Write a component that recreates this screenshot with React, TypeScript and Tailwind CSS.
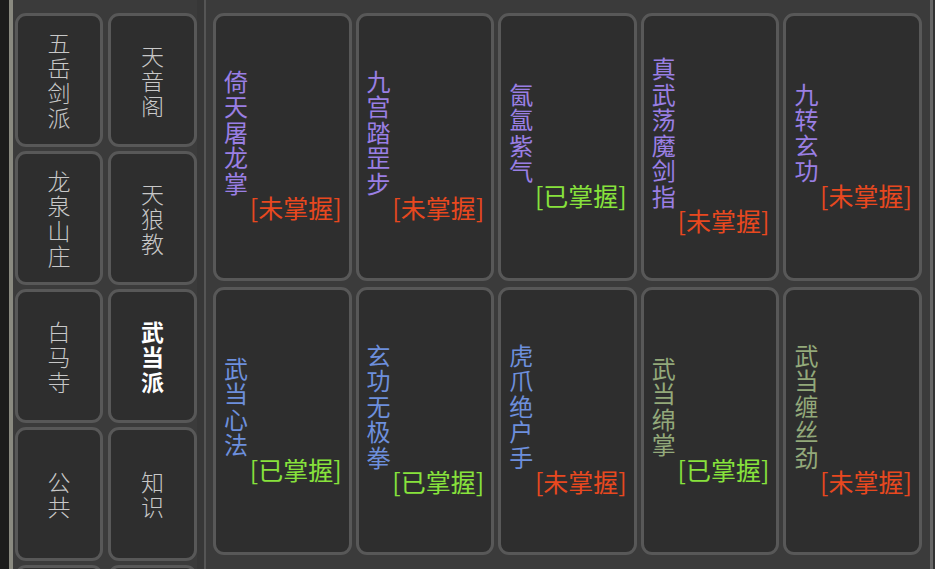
const sects = [
  "五岳剑派",
  "天音阁",
  "龙泉山庄",
  "天狼教",
  "白马寺",
  "武当派",
  "公共",
  "知识",
  "",
  "",
];

const PURPLE = "text-[#9a7fe4]";
const BLUE = "text-[#6d8fdc]";
const OLIVE = "text-[#93a97a]";

const skills = [
  { name: "倚天屠龙掌", color: PURPLE, learned: false },
  { name: "九宫踏罡步", color: PURPLE, learned: false },
  { name: "氤氲紫气", color: PURPLE, learned: true },
  { name: "真武荡魔剑指", color: PURPLE, learned: false },
  { name: "九转玄功", color: PURPLE, learned: false },
  { name: "武当心法", color: BLUE, learned: true },
  { name: "玄功无极拳", color: BLUE, learned: true },
  { name: "虎爪绝户手", color: BLUE, learned: false },
  { name: "武当绵掌", color: OLIVE, learned: true },
  { name: "武当缠丝劲", color: OLIVE, learned: false },
];

const font = "font-['Noto_Sans_CJK_SC',sans-serif]";

function SectCard({ label, active }: { label: string; active: boolean }) {
  return (
    <div className="flex items-center justify-center rounded-[11px] border-[3px] border-[#585858] bg-[#2e2e2e]">
      <div
        className={
          active
            ? "flex flex-col items-center text-[23px] leading-[25px] font-bold text-white"
            : "flex flex-col items-center text-[23px] leading-[25px] font-light text-[#c8c8c8]"
        }
      >
        {label.split("").map((c, i) => (
          <span key={i}>{c}</span>
        ))}
      </div>
    </div>
  );
}

function SkillCard({
  name,
  color,
  learned,
}: {
  name: string;
  color: string;
  learned: boolean;
}) {
  return (
    <div className="flex flex-col justify-center rounded-[11px] border-[3px] border-[#585858] bg-[#2e2e2e] pb-[6px] pl-[8px] pr-[7px]">
      <div className={`flex flex-col items-start text-[24px] leading-[25.5px] ${color}`}>
        {name.split("").map((c, i) => (
          <span key={i}>{c}</span>
        ))}
      </div>
      <div
        className={
          learned
            ? "self-end text-[25px] leading-[25px] text-[#87e23c]"
            : "self-end text-[25px] leading-[25px] text-[#e8481f]"
        }
      >
        {learned ? "[已掌握]" : "[未掌握]"}
      </div>
    </div>
  );
}

export default function App() {
  return (
    <div className={`flex h-[569px] w-[935px] overflow-hidden bg-[#3b3b3b] ${font}`}>
      <div className="w-[9px] shrink-0 bg-[#1c1c1c]" />
      <div className="w-[4px] shrink-0 bg-[#8a8a80]" />
      <div className="ml-[2px] grid w-[182px] shrink-0 auto-rows-[134px] grid-cols-[88px_89px] gap-x-[5px] gap-y-[4px] pt-[13px]">
        {sects.map((s, i) => (
          <SectCard key={i} label={s} active={s === "武当派"} />
        ))}
      </div>
      <div className="w-[7px] shrink-0 bg-[#373737]" />
      <div className="w-[2px] shrink-0 bg-[#555555]" />
      <div className="grid w-[716px] shrink-0 grid-cols-5 grid-rows-[268px_268px] gap-x-[4px] gap-y-[6px] pl-[7px] pt-[13px]">
        {skills.map((s) => (
          <SkillCard key={s.name} {...s} />
        ))}
      </div>
      <div className="w-[8px] shrink-0" />
      <div className="w-[3px] shrink-0 bg-[#666666]" />
      <div className="flex-1 bg-[#333333]" />
    </div>
  );
}
